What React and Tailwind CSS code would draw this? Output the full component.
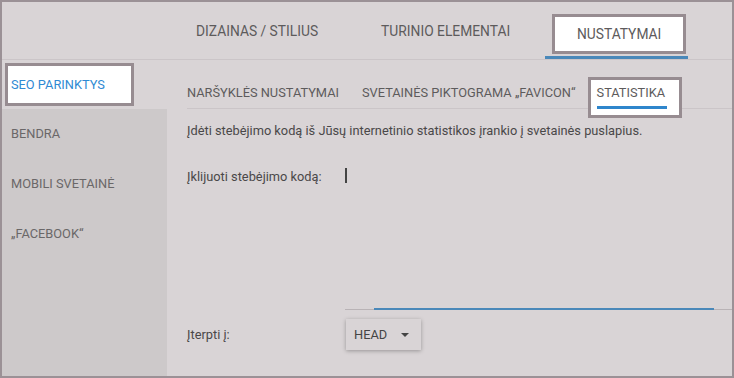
import React from 'react';

const sideItems = ['BENDRA', 'MOBILI SVETAINĖ', '„FACEBOOK“'];

export default function App() {
  return (
    <div className="w-[734px] h-[378px] border-2 border-[#9b9196] bg-[#d9d4d6] flex flex-col overflow-hidden font-['Roboto',sans-serif]">
      {/* Top tabs */}
      <div className="h-[58px] shrink-0 border-b border-[#cbc5c8] flex items-start text-[13.8px] leading-[18px] text-[#5d5b5c]">
        <span className="ml-[194px] mt-[20px]">DIZAINAS / STILIUS</span>
        <span className="ml-[63px] mt-[20px]">TURINIO ELEMENTAI</span>
        <div className="ml-[35px] mt-[12px] w-[143px] flex flex-col items-start">
          <div className="ml-[7px] w-[134px] h-[40px] border-[3px] border-[#978c91] bg-white flex items-center justify-center">
            NUSTATYMAI
          </div>
          <div className="mt-[2px] h-[3px] w-full bg-[#4a88b9]" />
        </div>
      </div>

      <div className="flex flex-1">
        {/* Sidebar */}
        <div className="w-[165px] shrink-0 flex flex-col">
          <div className="h-[49px] pl-[3px] pt-[3px]">
            <div className="w-[129px] h-[43px] border-[3px] border-[#978c91] bg-white flex items-center pl-[3px] text-[12.8px] text-[#2f8ad3]">
              SEO PARINKTYS
            </div>
          </div>
          <div className="flex-1 bg-[#cdc9ca]">
            {sideItems.map(item => (
              <div key={item} className="h-[50px] flex items-center pl-[9px] text-[12.8px] text-[#6a6768]">
                {item}
              </div>
            ))}
          </div>
        </div>

        {/* Main */}
        <div className="flex-1 flex flex-col text-[12.8px] leading-4">
          <div className="ml-[20px] h-[49px] border-b border-[#cbc5c8] flex items-start text-[#5d5b5c]">
            <span className="mt-[25px]">NARŠYKLĖS NUSTATYMAI</span>
            <span className="mt-[25px] ml-[23px]">SVETAINĖS PIKTOGRAMA „FAVICON“</span>
            <div className="relative z-10 mt-[17px] ml-[12px] w-[94px] border-[3px] border-[#978c91] bg-white px-[6px] pt-[5px] pb-[6px]">
              <div>STATISTIKA</div>
              <div className="mt-[5px] h-[3px] w-[70px] bg-[#2f86cc]" />
            </div>
          </div>

          <p className="ml-[20px] mt-[14px] text-[#4a4849]">
            Įdėti stebėjimo kodą iš Jūsų internetinio statistikos įrankio į svetainės puslapius.
          </p>

          <div className="ml-[20px] mt-[30px] flex text-[#4a4849]">
            <span className="w-[158px] shrink-0">Įklijuoti stebėjimo kodą:</span>
            <div className="flex-1 h-[141px] flex flex-col">
              <div className="w-[1.5px] h-[15px] bg-[#444] -mt-px" />
              <div className="relative mt-auto h-px bg-[#b9b3b6]">
                <div className="absolute left-[29px] right-[18px] -top-px h-[2px] bg-[#4a88b9]" />
              </div>
            </div>
          </div>

          <div className="ml-[20px] mt-[9px] flex items-center text-[#4a4849]">
            <span className="w-[159px] shrink-0">Įterpti į:</span>
            <div className="w-[75px] h-[31px] flex items-center pl-[8px] bg-[#d9d4d6] text-[#444] shadow-[0_1px_4px_rgba(0,0,0,0.3)]">
              HEAD
              <svg width="8" height="4" viewBox="0 0 8 4" className="ml-[14px]">
                <path d="M0 0h8L4 4z" fill="#444" />
              </svg>
            </div>
          </div>
        </div>
      </div>
    </div>
  );
}
